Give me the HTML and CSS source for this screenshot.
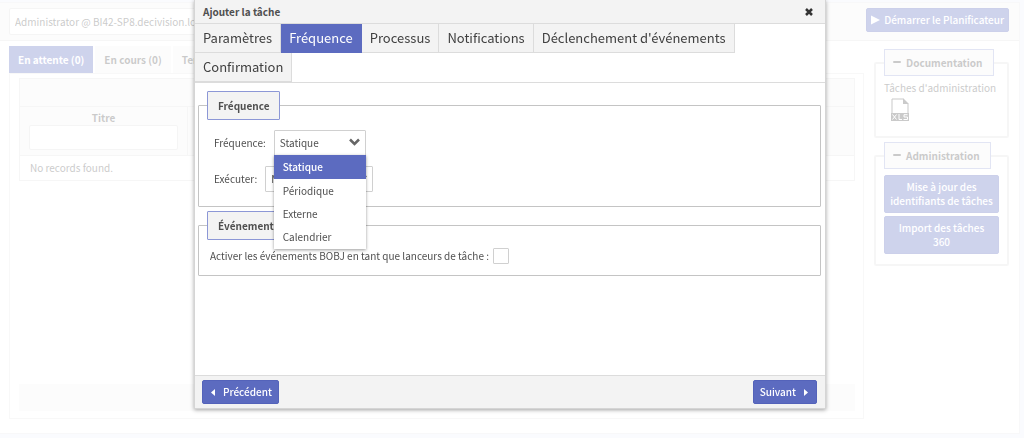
FILE: index.html
```html
<!DOCTYPE html>
<html lang="fr">
<head>
<meta charset="utf-8">
<title>Planificateur</title>
<link rel="stylesheet" href="styles.css">
</head>
<body>
<div class="page">
  <header class="topbar">
    <input class="field server" type="text" aria-label="Serveur" value="Administrator @ BI42-SP8.decivision.local">
    <button class="btn start" type="button">
      <svg class="ico-play" viewBox="0 0 9 10" aria-hidden="true"><path d="M0 0.5 9 5 0 9.5z"/></svg>Démarrer le Planificateur
    </button>
  </header>
  <div class="columns">
    <main class="jobs">
      <nav class="tabs">
        <button class="tab active" type="button">En attente (0)</button>
        <button class="tab" type="button">En cours (0)</button>
        <button class="tab" type="button">Terminées</button>
      </nav>
      <section class="tab-panel">
        <div class="toolbar"></div>
        <table class="grid">
          <thead>
            <tr>
              <th class="col-title"><label for="filter">Titre</label><input class="field filter" id="filter" type="text"></th>
              <th></th>
            </tr>
          </thead>
          <tbody><tr><td colspan="2">No records found.</td></tr></tbody>
        </table>
        <div class="pager"></div>
      </section>
    </main>
    <aside class="side">
      <fieldset class="group">
        <legend><svg class="ico-minus" viewBox="0 0 8 3" aria-hidden="true"><rect width="8" height="2" rx="1"/></svg>Documentation</legend>
        <p class="doc-title">Tâches d'administration</p>
        <a class="doc-link" href="#" aria-label="Tâches d'administration (XLS)">
          <svg class="ico-xls" viewBox="0 0 18 23" aria-hidden="true">
            <path class="sheet" d="M1 15V1h11l5 5v9"/>
            <path class="fold" d="M12 0l6 6h-6z"/>
            <rect class="band" y="15" width="18" height="8"/>
            <path class="mark" d="M1.500 16.500l4 5M5.500 16.500l-4 5M8 16v5.500h3M16.500 16.700h-3.500v2.300h3.500v2.500h-4"/>
          </svg>
        </a>
      </fieldset>
      <fieldset class="group">
        <legend><svg class="ico-minus" viewBox="0 0 8 3" aria-hidden="true"><rect width="8" height="2" rx="1"/></svg>Administration</legend>
        <div class="actions">
          <button class="btn wide" type="button">Mise à jour des identifiants de tâches</button>
          <button class="btn wide" type="button">Import des tâches<br>360</button>
        </div>
      </fieldset>
    </aside>
  </div>
</div>

<div class="overlay">
  <div class="dialog" role="dialog" aria-labelledby="dialog-title">
    <div class="dialog-head">
      <h2 id="dialog-title">Ajouter la tâche</h2>
      <button class="close" type="button" aria-label="Fermer">
        <svg viewBox="0 0 8 8" aria-hidden="true"><path d="M1 1l6 6M7 1L1 7"/></svg>
      </button>
    </div>
    <nav class="steps">
      <button class="step" type="button">Paramètres</button>
      <button class="step active" type="button">Fréquence</button>
      <button class="step" type="button">Processus</button>
      <button class="step" type="button">Notifications</button>
      <button class="step" type="button">Déclenchement d'événements</button>
      <button class="step" type="button">Confirmation</button>
    </nav>
    <div class="dialog-body">
      <fieldset class="box">
        <legend>Fréquence</legend>
        <div class="row">
          <label for="freq">Fréquence:</label>
          <div class="combo">
            <select id="freq"><option>Statique</option><option>Périodique</option><option>Externe</option><option>Calendrier</option></select>
            <svg class="chevron" viewBox="0 0 11 8" aria-hidden="true"><path d="M1 1.500l4.500 4.500 4.500-4.500"/></svg>
            <ul class="menu" role="listbox">
              <li class="selected" role="option" aria-selected="true">Statique</li>
              <li role="option">Périodique</li>
              <li role="option">Externe</li>
              <li role="option">Calendrier</li>
            </ul>
          </div>
        </div>
        <div class="row">
          <label for="run">Exécuter:</label>
          <div class="combo run">
            <select id="run"><option>Maintenant</option></select>
            <svg class="chevron" viewBox="0 0 11 8" aria-hidden="true"><path d="M1 1.500l4.500 4.500 4.500-4.500"/></svg>
          </div>
        </div>
      </fieldset>
      <fieldset class="box events">
        <legend>Événements</legend>
        <div class="check-row">
          <label for="bobj">Activer les événements BOBJ en tant que lanceurs de tâche :</label>
          <input id="bobj" type="checkbox">
        </div>
      </fieldset>
    </div>
    <footer class="dialog-foot">
      <button class="btn nav-btn" type="button"><svg class="ico-caret" viewBox="0 0 4 7" aria-hidden="true"><path d="M4 0v7L0 3.500z"/></svg>Précédent</button>
      <button class="btn nav-btn" type="button">Suivant<svg class="ico-caret" viewBox="0 0 4 7" aria-hidden="true"><path d="M0 0v7l4-3.500z"/></svg></button>
    </footer>
  </div>
</div>
</body>
</html>
```
FILE: styles.css
```css
* { box-sizing: border-box; }

body {
  margin: 0;
  min-height: 100vh;
  background: #eef0fa;
  color: #4f4f4f;
  font: 10px/14px "Noto Sans CJK SC", "Noto Sans", sans-serif;
}

button, input, select { font: inherit; color: inherit; margin: 0; }
fieldset { margin: 0; min-width: 0; }
svg { display: block; flex: none; fill: currentColor; }

.page {
  display: flex;
  flex-direction: column;
  min-height: calc(100vh - 6px);
  margin: 2px 4px 4px 0;
  border: 1px solid #e8e8ec;
  border-left: 0;
  background: #fdfdfd;
}

.topbar {
  display: flex;
  justify-content: space-between;
  align-items: flex-start;
  height: 38px;
  padding: 5px 10px 5px 9px;
  background: #f3f3f3;
  border-bottom: 1px solid #e2e2e2;
}

.field { background: #fff; border: 1px solid #dcdcdc; border-radius: 2px; }
.server { width: 300px; height: 27px; padding: 0 5px; }

.btn {
  display: flex;
  align-items: center;
  justify-content: center;
  height: 24px;
  padding: 0 6px;
  border: 1px solid #5463ba;
  border-radius: 2px;
  background: #5c6bc0;
  color: #fff;
  font-weight: 500;
}
.start { gap: 4px; padding: 0 4px; }
.ico-play { width: 9px; height: 10px; }

.columns { display: flex; flex: 1; gap: 10px; padding: 5px 10px 14px 9px; }
.jobs { display: flex; flex: 1; flex-direction: column; min-width: 0; }
.tabs { display: flex; gap: 2px; }
.tab {
  height: 27px;
  padding: 0 9px;
  border: 0;
  background: #f6f6f6;
  font-weight: 700;
}
.tab.active { background: #5c6bc0; color: #fff; }

.tab-panel {
  display: flex;
  flex: 1;
  flex-direction: column;
  padding: 4px 8px 7px 9px;
  border: 1px solid #e6e6e6;
}
.toolbar { height: 28px; background: #f3f3f3; border: 1px solid #e2e2e2; border-bottom: 0; }
.grid { width: 100%; border-collapse: collapse; table-layout: fixed; }
.grid th { height: 49px; padding: 4px 9px 5px; background: #f3f3f3; border: 1px solid #e2e2e2; }
.grid td { height: 25px; padding: 0 10px; border: 1px solid #e2e2e2; }
.col-title { width: 168px; }
.grid label { display: block; }
.filter { display: block; width: 100%; height: 25px; }
.pager { height: 27px; margin-top: auto; background: #f3f3f3; }

.side { flex: none; width: 135px; padding-top: 3px; }
.group { padding: 0 8px 10px; border: 2px solid #e2e2e2; border-radius: 2px; }
.group + .group { margin-top: 4px; }
.group legend {
  display: flex;
  align-items: center;
  gap: 5px;
  height: 27px;
  padding: 0 10px 0 8px;
  border: 1px solid #9fa8da;
  background: #f3f3f3;
  font-weight: 700;
}
.ico-minus { width: 8px; height: 3px; }
.doc-title { margin: 5px 0 3px; white-space: nowrap; }
.doc-link { display: block; height: 28px; padding-left: 7px; color: inherit; }
.ico-xls { width: 18px; height: 23px; }
.sheet, .mark { fill: none; stroke: currentColor; stroke-width: 1; }
.mark { stroke: #fff; }
.actions { display: flex; flex-direction: column; gap: 3px; padding-top: 6px; }
.wide { height: 38px; padding: 0; }

.overlay {
  position: fixed;
  inset: 0;
  display: flex;
  justify-content: center;
  align-items: flex-start;
  padding: 0 4px 29px 0;
  background: rgba(255, 255, 255, 0.7);
}
.dialog {
  display: flex;
  flex-direction: column;
  width: 632px;
  height: 100%;
  border: 1px solid #d5d5d5;
  border-top: 0;
  background: #fff;
  box-shadow: 0 1px 4px rgba(0, 0, 0, 0.35);
}
.dialog-head {
  display: flex;
  justify-content: space-between;
  align-items: center;
  height: 24px;
  padding: 0 10px 0 8px;
  background: #f3f3f3;
  border-bottom: 1px solid #dcdcdc;
}
.dialog-head h2 { margin: 0; font-size: 10px; }
.close { padding: 2px; border: 0; background: none; }
.close svg { width: 8px; height: 8px; stroke: #333; stroke-width: 2.500; }

.steps { display: flex; flex-wrap: wrap; border-bottom: 1px solid #dcdcdc; }
.step {
  height: 29px;
  padding: 0 8px;
  border: 1px solid #dcdcdc;
  border-width: 0 1px 1px 0;
  background: #f3f3f3;
  color: #404040;
  font-size: 13px;
}
.step.active { background: #5c6bc0; border-color: #5c6bc0; color: #fff; }

.dialog-body { flex: 1; padding: 8px 4px 8px 3px; }
.box { padding: 10px 8px 14px; border: 1px solid #c4c4c4; border-radius: 1px; }
.box legend {
  height: 29px;
  padding: 0 10px;
  border: 1px solid #8c97d6;
  border-radius: 1px;
  background: #f3f3f3;
  font-weight: 700;
  line-height: 27px;
}
.box.events { margin-top: 4px; padding: 8px 8px 11px; }
.row { display: flex; align-items: center; gap: 8px; padding-left: 7px; }
.row + .row { margin-top: 10px; }
.combo { position: relative; width: 92px; }
.combo.run { width: 108px; }
.combo select {
  display: block;
  width: 100%;
  height: 26px;
  padding: 0 5px;
  appearance: none;
  border: 1px solid #d0d0d0;
  border-radius: 1px;
  background: #fff;
}
.chevron {
  position: absolute;
  top: 8px;
  right: 6px;
  width: 11px;
  height: 8px;
  fill: none;
  stroke: #666;
  stroke-width: 2.500;
  pointer-events: none;
}
.menu {
  position: absolute;
  z-index: 1;
  top: 25px;
  left: 0;
  width: 92px;
  margin: 0;
  padding: 0 0 1px;
  list-style: none;
  background: #fff;
  box-shadow: 0 1px 3px rgba(0, 0, 0, 0.4);
}
.menu li { height: 23px; padding: 0 9px; line-height: 23px; }
.menu .selected { height: 24px; background: #5c6bc0; color: #fff; font-weight: 500; }

.check-row { display: flex; align-items: center; gap: 4px; padding-left: 3px; }
.check-row input {
  width: 16px;
  height: 16px;
  appearance: none;
  border: 1px solid #d0d0d0;
  border-radius: 1px;
  background: #fff;
}

.dialog-foot {
  display: flex;
  justify-content: space-between;
  align-items: center;
  height: 33px;
  padding: 0 8px 0 7px;
  background: #f3f3f3;
  border-top: 1px solid #dcdcdc;
}
.nav-btn { gap: 6px; }
.ico-caret { width: 4px; height: 7px; margin: 0 2px; }
```
